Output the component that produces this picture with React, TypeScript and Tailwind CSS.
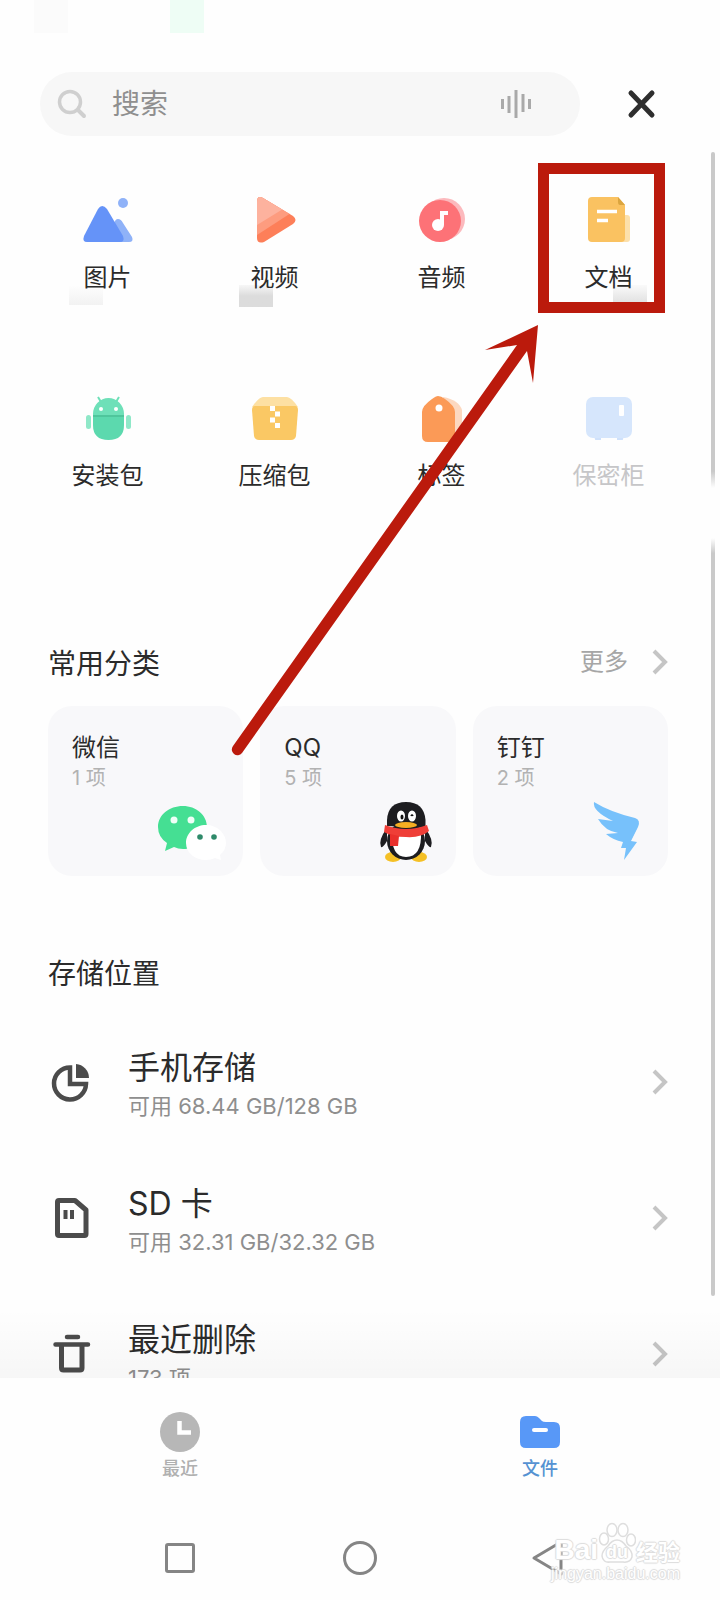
import type { ReactNode } from "react";

const PicturesIcon = () => (
  <svg viewBox="0 0 60 60" className="h-[60px] w-[60px]" aria-hidden="true">
    <circle cx="45" cy="13" r="5" fill="#8fb2f8" />
    <path d="M36 34 Q37 29 40 29 Q43 29 45 33 L54 47 Q56 52 51 52 H30 Z" fill="#8fb2f8" />
    <path d="M20 19 Q24 13 29 19 L45 46 Q47 52 42 52 H9 Q4 52 6 46 Z" fill="#6593f8" />
  </svg>
);

const VideoIcon = () => (
  <svg viewBox="0 0 60 60" className="h-[60px] w-[60px]" aria-hidden="true">
    <defs>
      <clipPath id="play">
        <path d="M12 12 Q12 5 18 8 L48 26 Q53 30 48 34 L19 52 Q12 54 12 48 Z" />
      </clipPath>
    </defs>
    <g clipPath="url(#play)">
      <rect width="60" height="60" fill="#fd7f59" />
      <path d="M0 0 H60 V14 L12 45 L0 50 Z" fill="#fd9c7f" />
      <path d="M0 0 H36 L38 19 L12 35 L0 40 Z" fill="#fdb29e" />
    </g>
  </svg>
);

const AudioIcon = () => (
  <svg viewBox="0 0 60 60" className="h-[60px] w-[60px]" aria-hidden="true">
    <circle cx="32" cy="29" r="21" fill="#fcb9bd" />
    <circle cx="28" cy="31" r="21" fill="#fd7277" />
    <circle cx="26" cy="35" r="6" fill="#fff" />
    <path d="M28 35 V21 H36 V25 H32 V35 Z" fill="#fff" />
  </svg>
);

const DocsIcon = () => (
  <svg viewBox="0 0 60 60" className="h-[60px] w-[60px]" aria-hidden="true">
    <rect x="26" y="25" width="25" height="27" rx="3" fill="#fce0ab" />
    <path d="M13 7 H39 L46 15 V48 Q46 52 42 52 H13 Q9 52 9 48 V11 Q9 7 13 7 Z" fill="#fac261" />
    <path d="M39 7 L46 15 H41 Q39 15 39 12 Z" fill="#dba53f" />
    <path d="M18 21.500 H38 M18 30.500 H29" stroke="#fff" strokeWidth="3.500" />
  </svg>
);

const AndroidIcon = () => (
  <svg viewBox="0 -2 60 60" className="h-[60px] w-[60px]" aria-hidden="true">
    <path d="M20 7 L23 12 M41 7 L38 12" stroke="#6ee0b8" strokeWidth="2" />
    <path d="M15 25 V24 A15.500 16 0 0 1 46 24 V25 Z" fill="#6ee0b8" />
    <path d="M15 26 H46 V35 Q46 50 30.500 50 Q15 50 15 35 Z" fill="#5cd9ae" />
    <path d="M15 25 H46 V27 H15 Z" fill="#4fc69c" />
    <rect x="8" y="25" width="5" height="14" rx="2.500" fill="#8fe8c8" />
    <rect x="48" y="25" width="5" height="14" rx="2.500" fill="#8fe8c8" />
    <circle cx="23" cy="19" r="2" fill="#fff" />
    <circle cx="38" cy="19" r="2" fill="#fff" />
  </svg>
);

const ArchiveIcon = () => (
  <svg viewBox="0 -2 60 60" className="h-[60px] w-[60px]" aria-hidden="true">
    <path d="M18 7 H42 Q46 7 53 17 H7 Q14 7 18 7 Z" fill="#fde0a3" />
    <path d="M10 16 H50 Q53 16 53 20 L51 46 Q50 50 46 50 H14 Q10 50 9 46 L7 20 Q7 16 10 16 Z" fill="#fac864" />
    <path d="M25 16h5v5h-5zM30 21.500h5v5h-5zM25 27.500h5v5h-5zM30 33h5v5h-5z" fill="#fff" />
  </svg>
);

const TagIcon = () => (
  <svg viewBox="0 -2 60 60" className="h-[60px] w-[60px]" aria-hidden="true">
    <path d="M31 7 Q47 10 50 20 V46 Q50 51 45 51 H30 Z" fill="#fcd8c0" />
    <path d="M26 6 Q29 6 33 9 Q43 16 43 22 V46 Q43 52 38 52 H16 Q10 52 10 46 V22 Q10 16 20 9 Q24 6 26 6 Z" fill="#fb9a57" />
    <circle cx="27" cy="18" r="3.500" fill="#fff" />
  </svg>
);

const SafeIcon = () => (
  <svg viewBox="0 -2 60 60" className="h-[60px] w-[60px]" aria-hidden="true">
    <path d="M16 46 H21 V49 H17 Z M39 46 H44 L43 49 H39 Z" fill="#cfe1fb" stroke="#cfe1fb" strokeWidth="2" />
    <rect x="7" y="7" width="46" height="41" rx="7" fill="#d6e6fc" />
    <rect x="40" y="15" width="5" height="11" rx="1" fill="#fff" />
  </svg>
);

const WeChatIcon = () => (
  <svg viewBox="0 0 72 64" className="mr-1 h-16 w-[72px]" aria-hidden="true">
    <path d="M28 6 C41 6 52 15 52 27 C52 40 41 49 28 49 Q23 49 19 47 L10 51 L12 43 Q3 37 3 27 C3 15 14 6 28 6 Z" fill="#45df93" />
    <circle cx="19" cy="20" r="3.500" fill="#effff7" />
    <circle cx="36" cy="20" r="3.500" fill="#effff7" />
    <path d="M51 25 C62 25 71 33 71 43 Q71 50 65 55 L66 60 L60 58 Q56 60 51 60 C40 60 31 53 31 43 C31 33 40 25 51 25 Z" fill="#fff" />
    <circle cx="45" cy="37" r="2.800" fill="#2f8a6a" />
    <circle cx="59" cy="37" r="2.800" fill="#2f8a6a" />
  </svg>
);

const QQIcon = () => (
  <svg viewBox="0 0 60 66" className="mr-2 h-[66px] w-[60px]" aria-hidden="true">
    <ellipse cx="17" cy="59" rx="8" ry="5" fill="#f5c025" />
    <ellipse cx="43" cy="59" rx="8" ry="5" fill="#f5c025" />
    <path d="M11 30 Q2 42 5 49 Q7 50 11 43 Z M49 30 Q58 42 55 49 Q53 50 49 43 Z" fill="#1d1d20" />
    <ellipse cx="30" cy="43" rx="19" ry="19" fill="#1d1d20" />
    <path d="M11 28 V22 Q12 4 30 4 Q48 4 49.500 22 V30 Z" fill="#1d1d20" />
    <path d="M16 34 H45 Q46 59 30 59 Q15 59 16 34 Z" fill="#fff" />
    <ellipse cx="25" cy="18" rx="4" ry="5.500" fill="#fff" />
    <ellipse cx="36" cy="18" rx="4" ry="5.500" fill="#fff" />
    <ellipse cx="26" cy="19" rx="1.500" ry="2.500" fill="#111" />
    <path d="M35 18 Q36 16 37 18" fill="none" stroke="#111" strokeWidth="1.500" />
    <path d="M9 27 Q30 35 51 27 L53 33 Q45 40 30 39 Q16 39 8 34 Z" fill="#ef3e37" />
    <path d="M14 36 L23 38 L22 48 H14 Z" fill="#e9302c" />
    <ellipse cx="30" cy="27" rx="11" ry="3" fill="#f5ae22" />
  </svg>
);

const DingTalkIcon = () => (
  <svg viewBox="0 0 60 66" className="mr-2 h-[66px] w-[60px]" aria-hidden="true">
    <path
      d="M6 4 Q22 14 47 20 Q53 22 50 29 L43 43 L49 44 L36 62 L38 50 L33 50 L35 44 Q25 42 18 36 L30 35 Q17 33 10 21 L25 23 Q4 13 6 4 Z"
      fill="#77c1fb"
    />
  </svg>
);

const PieIcon = () => (
  <svg viewBox="-3 -1 44 40" className="h-10 w-11" aria-hidden="true">
    <path d="M19 4.500 A16 16 0 1 0 35 21 H19 Z" fill="none" stroke="#4b4b4b" strokeWidth="4.500" />
    <path d="M25 1 A14 14 0 0 1 38 15 H25 Z" fill="#4b4b4b" />
  </svg>
);

const SdCardIcon = () => (
  <svg viewBox="-2 0 44 40" className="h-10 w-11" aria-hidden="true">
    <path d="M9 2.500 H25 L36 12 V36 Q36 37.500 34.500 37.500 H9 Q7.500 37.500 7.500 36 V4 Q7.500 2.500 9 2.500 Z" fill="none" stroke="#4b4b4b" strokeWidth="5" strokeLinejoin="round" />
    <path d="M15.500 12 V21 M22 12 V21" stroke="#4b4b4b" strokeWidth="4" />
  </svg>
);

const TrashIcon = () => (
  <svg viewBox="-2 0 44 40" className="h-10 w-11" aria-hidden="true">
    <path d="M17 3 H28 M5.500 10.500 H38" stroke="#4b4b4b" strokeWidth="4.500" strokeLinecap="round" />
    <path d="M11.500 11 V34 Q11.500 36 13.500 36 H30 Q32 36 32 34 V11" fill="none" stroke="#4b4b4b" strokeWidth="5" />
  </svg>
);

const Chevron = () => (
  <svg viewBox="0 0 16 26" className="h-[26px] w-4 shrink-0" aria-hidden="true">
    <path d="M2 2 L13 13 L2 24" fill="none" stroke="#c5c5c5" strokeWidth="4" />
  </svg>
);

type Category = { label: string; icon: ReactNode; muted?: boolean; marked?: boolean; smudge?: string };

const categories: Category[] = [
  { label: "图片", icon: <PicturesIcon />, smudge: "left-[45px] h-5 w-[34px] bg-linear-to-b from-transparent to-[#f2f2f2]" },
  { label: "视频", icon: <VideoIcon />, smudge: "left-[48px] h-[22px] w-[34px] bg-linear-to-b from-[#ececec]/40 to-[#dcdcdc] to-50%" },
  { label: "音频", icon: <AudioIcon /> },
  { label: "文档", icon: <DocsIcon />, marked: true, smudge: "left-[88px] h-5 w-[34px] bg-linear-to-b from-[#f4f4f4]/40 to-[#dedede]" },
  { label: "安装包", icon: <AndroidIcon /> },
  { label: "压缩包", icon: <ArchiveIcon /> },
  { label: "标签", icon: <TagIcon /> },
  { label: "保密柜", icon: <SafeIcon />, muted: true },
];

const apps = [
  { name: "微信", count: "1 项", icon: <WeChatIcon /> },
  { name: "QQ", count: "5 项", icon: <QQIcon /> },
  { name: "钉钉", count: "2 项", icon: <DingTalkIcon /> },
];

const places = [
  { name: "手机存储", detail: "可用 68.44 GB/128 GB", icon: <PieIcon /> },
  { name: "SD 卡", detail: "可用 32.31 GB/32.32 GB", icon: <SdCardIcon /> },
  { name: "最近删除", detail: "173 项", icon: <TrashIcon /> },
];

function SearchBar() {
  return (
    <header className="flex items-center pt-[72px] pr-[62px] pl-10">
      <label className="flex h-16 min-w-0 flex-1 items-center rounded-full bg-[#f7f7f7] pr-12 pl-4">
        <svg viewBox="0 0 32 32" className="h-8 w-8 shrink-0" aria-hidden="true">
          <circle cx="14" cy="14" r="10.500" fill="none" stroke="#cfcfcf" strokeWidth="3.500" />
          <path d="M22 22 L28 28" stroke="#cfcfcf" strokeWidth="4" strokeLinecap="round" />
        </svg>
        <input
          type="text"
          aria-label="搜索"
          placeholder="搜索"
          className="ml-6 min-w-0 flex-1 bg-transparent text-[28px] leading-10 outline-none placeholder:text-[#8f8f8f]"
        />
        <svg viewBox="0 0 32 30" className="h-[30px] w-8 shrink-0" aria-hidden="true">
          <path d="M2.500 10V20M9 7V24M16 1V29M23 5V23M29.500 10V20" stroke="#a9a9a9" strokeWidth="3" />
        </svg>
      </label>
      <button type="button" aria-label="关闭" className="ml-[46px] shrink-0">
        <svg viewBox="0 0 32 32" className="h-8 w-8" aria-hidden="true">
          <path d="M5 5 L26 27 M26 5 L5 27" stroke="#2e2e2e" strokeWidth="5" strokeLinecap="round" />
        </svg>
      </button>
    </header>
  );
}

function StatusPatches() {
  return (
    <div className="absolute top-0 left-[34px] flex gap-[102px]" aria-hidden="true">
      <div className="h-[33px] w-[34px] bg-[#fbfbfb]" />
      <div className="h-[33px] w-[34px] bg-[#eefdf5]" />
    </div>
  );
}

function Watermark() {
  return (
    <div className="pointer-events-none absolute right-10 bottom-4 font-['Liberation_Sans',sans-serif] font-bold text-white [text-shadow:1px_0_1px_#dcdcdc,-1px_0_1px_#dcdcdc,0_1px_1px_#dcdcdc,0_-1px_1px_#dcdcdc]">
      <div className="flex h-[42px] items-end justify-end">
        <span className="text-[28px] leading-7">Bai</span>
        <span className="relative flex h-[42px] w-[38px] items-end justify-center">
          <svg viewBox="0 0 38 42" className="absolute inset-0 h-[42px] w-[38px]" aria-hidden="true">
            <g fill="#fff" stroke="#dedede" strokeWidth="1.500">
              <ellipse cx="6" cy="17" rx="4.500" ry="6" />
              <ellipse cx="14" cy="8" rx="5" ry="6.500" />
              <ellipse cx="25" cy="8" rx="5" ry="6.500" />
              <ellipse cx="33" cy="18" rx="4.500" ry="6" />
              <path d="M19 18 Q24 18 28 24 Q35 29 34 35 Q32 41 25 40 H12 Q5 41 4 34 Q4 29 10 24 Q14 18 19 18 Z" />
            </g>
          </svg>
          <span className="relative text-[18px] leading-6">du</span>
        </span>
        <span className="font-['Noto_Sans_CJK_SC',sans-serif] text-[22px] leading-7">经验</span>
      </div>
      <div className="text-center text-base leading-5 font-normal">jingyan.baidu.com</div>
    </div>
  );
}

export default function App() {
  return (
    <div className="relative flex h-screen flex-col overflow-hidden bg-[#fefefe] font-['Inter','Noto_Sans_CJK_SC',sans-serif] text-[#2b2b2b]">
      <StatusPatches />
      <main className="relative min-h-0 flex-1 overflow-hidden">
        <SearchBar />

        <nav aria-label="文件类型" className="grid grid-cols-4 gap-y-[86px] pt-[54px] pr-7 pl-6">
          {categories.map((c) => (
            <a key={c.label} href="#" className="relative flex h-28 flex-col items-center">
              {c.smudge && <span className={`absolute top-[95px] ${c.smudge}`} />}
              {c.marked && (
                <span className="absolute -top-[27px] left-1/2 h-[150px] w-[127px] -translate-x-[71px] border-[11px] border-[#bb1a0c]" />
              )}
              {c.icon}
              <span className={`relative mt-[10px] text-2xl leading-9 ${c.muted ? "text-[#c6c6c8]" : ""}`}>{c.label}</span>
            </a>
          ))}
        </nav>

        <section className="pt-[142px] pr-[52px] pl-12">
          <div className="flex h-10 items-center justify-between">
            <h2 className="pt-1 text-[28px] leading-10">常用分类</h2>
            <a href="#" className="flex items-center gap-6 text-2xl leading-9 text-[#a6a6a6]">
              更多
              <Chevron />
            </a>
          </div>
          <div className="mt-6 grid grid-cols-3 gap-[17px]">
            {apps.map((a) => (
              <a key={a.name} href="#" className="flex h-[170px] flex-col rounded-3xl bg-[#f8f8fa] pt-6 pr-3 pb-3 pl-6">
                <span className="text-2xl leading-9">{a.name}</span>
                <span className="text-xl leading-6 text-[#b2b2b2]">{a.count}</span>
                <span className="mt-auto self-end">{a.icon}</span>
              </a>
            ))}
          </div>
        </section>

        <section className="pt-[78px] pr-[52px] pl-12">
          <h2 className="text-[28px] leading-10">存储位置</h2>
          <ul className="mt-12 flex flex-col gap-14">
            {places.map((p) => (
              <li key={p.name}>
                <a href="#" className="flex h-20 items-center">
                  {p.icon}
                  <span className="ml-9 flex flex-1 flex-col pt-1">
                    <span className="text-[32px] leading-[44px]">{p.name}</span>
                    <span className="text-[22px] leading-8 text-[#8e8e8e]">{p.detail}</span>
                  </span>
                  <Chevron />
                </a>
              </li>
            ))}
          </ul>
        </section>

        <div className="pointer-events-none absolute inset-x-0 bottom-0 h-[70px] bg-linear-to-b from-transparent to-black/3" />
        <div className="absolute top-[152px] right-[5px] bottom-[82px] flex w-1 flex-col">
          <div className="h-[336px] rounded-t-full bg-linear-to-b from-[#c9c9c9] from-95% to-transparent" />
          <div className="h-[50px]" />
          <div className="flex-1 rounded-b-full bg-linear-to-b from-transparent to-[#c9c9c9] to-2%" />
        </div>
        <svg viewBox="0 0 308 434" className="pointer-events-none absolute top-[324px] left-[231px] h-[434px] w-[308px]" aria-hidden="true">
          <path d="M307 1 L254 26 L286 21 L2 422 A5.500 5.500 0 0 0 11 429 L296 27 L302 59 Z" fill="#bb1a0c" />
        </svg>
      </main>

      <nav aria-label="主导航" className="grid h-[130px] shrink-0 grid-cols-2 bg-[#fefefe] pt-[34px]">
        <a href="#" className="flex flex-col items-center text-lg leading-7 font-medium text-[#b0b0b0]">
          <svg viewBox="0 0 40 40" className="mb-[3px] h-10 w-10" aria-hidden="true">
            <circle cx="20" cy="20" r="20" fill="#b7b7b7" />
            <path d="M19.500 9 V20.500 H31" fill="none" stroke="#fff" strokeWidth="4.500" />
          </svg>
          最近
        </a>
        <a href="#" aria-current="page" className="flex flex-col items-center text-lg leading-7 font-medium text-[#5592d2]">
          <svg viewBox="0 0 40 40" className="mb-[3px] h-10 w-10" aria-hidden="true">
            <path d="M6 4 H15 Q17 4 19 6 L22 9 Q23 10 26 10 H34 Q40 10 40 16 V30 Q40 36 34 36 H6 Q0 36 0 30 V10 Q0 4 6 4 Z" fill="#5898f7" />
            <path d="M14 18 H26" stroke="#fff" strokeWidth="4" strokeLinecap="round" />
          </svg>
          文件
        </a>
      </nav>

      <div className="grid h-[92px] shrink-0 grid-cols-3 items-start justify-items-center bg-[#fefefe] px-[90px] pt-[34px]">
        <button type="button" aria-label="最近任务">
          <svg viewBox="0 0 32 32" className="h-8 w-8" aria-hidden="true">
            <rect x="2.500" y="2.500" width="27" height="27" rx="1.500" fill="none" stroke="#858585" strokeWidth="3" />
          </svg>
        </button>
        <button type="button" aria-label="主屏幕">
          <svg viewBox="0 0 36 32" className="h-8 w-9 overflow-visible" aria-hidden="true">
            <circle cx="18" cy="16" r="15.500" fill="none" stroke="#858585" strokeWidth="3" />
          </svg>
        </button>
        <button type="button" aria-label="返回">
          <svg viewBox="0 0 48 32" className="h-8 w-12 overflow-visible" aria-hidden="true">
            <path d="M45 0 V32 L18 16 Z" fill="none" stroke="#858585" strokeWidth="3" strokeLinejoin="round" />
          </svg>
        </button>
      </div>
      <Watermark />
    </div>
  );
}
